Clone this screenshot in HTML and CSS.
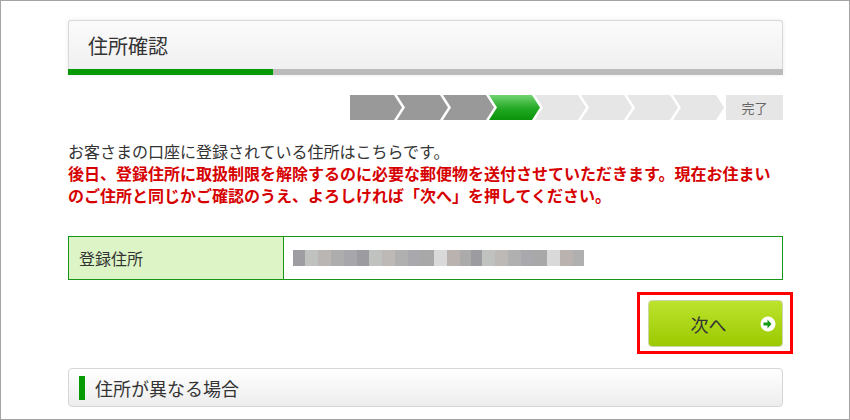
FILE: index.html
```html
<!DOCTYPE html>
<html lang="ja">
<head>
<meta charset="utf-8">
<title>住所確認</title>
<link rel="stylesheet" href="styles.css">
</head>
<body>
<div class="frame">
  <div class="header">
    <h1 class="header-title">住所確認</h1>
    <div class="header-bar"><div class="header-bar-fill"></div></div>
  </div>

  <div class="steps">
    <svg class="steps-svg" width="376" height="25" viewBox="0 0 376 25" aria-hidden="true">
      <defs>
        <linearGradient id="g" x1="0" y1="0" x2="0" y2="1">
          <stop offset="0" stop-color="#72d472"/>
          <stop offset="0.55" stop-color="#22a822"/>
          <stop offset="1" stop-color="#0a940a"/>
        </linearGradient>
      </defs>
      <polygon points="0,0 44,0 52,12.5 44,25 0,25" fill="#999999"/>
      <polygon points="47,0 90,0 98,12.5 90,25 47,25 55,12.5" fill="#999999"/>
      <polygon points="93,0 136,0 144,12.5 136,25 93,25 101,12.5" fill="#999999"/>
      <polygon points="139,0 182,0 190,12.5 182,25 139,25 147,12.5" fill="url(#g)"/>
      <polygon points="185,0 228,0 236,12.5 228,25 185,25 193,12.5" fill="#e6e6e6"/>
      <polygon points="231,0 274,0 282,12.5 274,25 231,25 239,12.5" fill="#e6e6e6"/>
      <polygon points="277,0 320,0 328,12.5 320,25 277,25 285,12.5" fill="#e6e6e6"/>
      <polygon points="323,0 366,0 374,12.5 366,25 323,25 331,12.5" fill="#e6e6e6"/>
    </svg>
    <div class="steps-done">完了</div>
  </div>

  <div class="intro">
    <p class="intro-text">お客さまの口座に登録されている住所はこちらです。</p>
    <p class="intro-alert">後日、登録住所に取扱制限を解除するのに必要な郵便物を送付させていただきます。現在お住まいのご住所と同じかご確認のうえ、よろしければ「次へ」を押してください。</p>
  </div>

  <div class="addr-table">
    <div class="addr-label">登録住所</div>
    <div class="addr-value"><div class="addr-mosaic"></div></div>
  </div>

  <div class="actions">
    <div class="next-wrap">
      <button class="next-btn" type="button">
        <span class="next-label">次へ</span>
        <svg class="next-icon" width="16" height="16" viewBox="0 0 16 16" aria-hidden="true">
          <circle cx="8" cy="8" r="7.5" fill="#ffffff"/>
          <path d="M3.5 6.5 H7.5 V3.5 L11.5 8 L7.5 12.5 V9.5 H3.5 Z" fill="#129a12"/>
        </svg>
      </button>
    </div>
  </div>

  <div class="section">
    <span class="section-mark"></span>
    <h2 class="section-title">住所が異なる場合</h2>
  </div>
</div>
</body>
</html>
```

FILE: styles.css
```css
* { box-sizing: border-box; }

html, body {
  margin: 0;
  padding: 0;
  background: #ffffff;
}

body {
  font-family: "Noto Sans CJK JP", "Noto Sans", "Liberation Sans", sans-serif;
  color: #333333;
}

.frame {
  width: 850px;
  height: 420px;
  border: 1px solid #a4a4a4;
  padding: 19px 66px 0 67px;
  overflow: hidden;
}

/* header */
.header {
  box-shadow: 0 0 5px rgba(0, 0, 0, 0.08);
  border-radius: 3px 3px 0 0;
}

.header-title {
  margin: 0;
  height: 49px;
  display: flex;
  align-items: center;
  padding-left: 19px;
  font-size: 20px;
  font-weight: normal;
  color: #333333;
  border: 1px solid #d8d8d8;
  border-bottom: none;
  border-radius: 3px 3px 0 0;
  background: linear-gradient(#fbfbfb, #f0f0f0);
}

.header-bar {
  height: 6px;
  background: #bbbbbb;
}

.header-bar-fill {
  width: 205px;
  height: 6px;
  background: #079a07;
}

/* steps */
.steps {
  margin-top: 20px;
  display: flex;
  justify-content: flex-end;
  height: 25px;
}

.steps-svg {
  display: block;
}

.steps-done {
  width: 57px;
  height: 25px;
  background: #e6e6e6;
  color: #666666;
  font-size: 13px;
  display: flex;
  align-items: center;
  justify-content: center;
}

/* intro */
.intro {
  margin-top: 20px;
}

.intro-text,
.intro-alert {
  margin: 0;
  font-size: 16px;
  line-height: 22px;
}

.intro-text {
  color: #333333;
}

.intro-alert {
  color: #d60000;
  font-weight: bold;
}

/* address table */
.addr-table {
  margin-top: 30px;
  display: grid;
  grid-template-columns: 215px 1fr;
  height: 44px;
  border: 1px solid #169616;
}

.addr-label {
  background: #ddf5c6;
  border-right: 1px solid #169616;
  display: flex;
  align-items: center;
  padding-left: 10px;
  font-size: 16px;
  color: #333333;
}

.addr-value {
  display: flex;
  align-items: center;
  padding-left: 9px;
}

.addr-mosaic {
  width: 291px;
  height: 16px;
  background: linear-gradient(to right,
    #9e9ea2 0 12px,
    #c0c2c0 12px 25px,
    #b9b6b3 25px 38px,
    #adadad 38px 51px,
    #a7a7ab 51px 64px,
    #9c9ca0 64px 76px,
    #c0c2c0 76px 89px,
    #bcb9b6 89px 102px,
    #b0b0b0 102px 115px,
    #a9a9ad 115px 128px,
    #a8a8a8 128px 141px,
    #d9d9d9 141px 154px,
    #b9b2af 154px 167px,
    #ababab 167px 178px,
    #9c9ca0 178px 189px,
    #c0c2c0 189px 202px,
    #bcb9b6 202px 215px,
    #b0b0b0 215px 228px,
    #a9a9ad 228px 241px,
    #a8a8a8 241px 254px,
    #d9d9d9 254px 267px,
    #b9b2af 267px 280px,
    #b0b0b0 280px 291px);
}

/* actions */
.actions {
  margin-top: 20px;
  display: flex;
  justify-content: flex-end;
}

.next-wrap {
  position: relative;
}

.next-wrap::after {
  content: "";
  position: absolute;
  top: -8px;
  left: -11px;
  right: -10px;
  bottom: -7px;
  border: 3px solid #ff0000;
  pointer-events: none;
}

.next-btn {
  width: 135px;
  height: 47px;
  border: 1px solid #cdd6a8;
  border-radius: 4px;
  background: linear-gradient(#bde32e, #9bc900);
  display: flex;
  align-items: center;
  justify-content: center;
  padding: 0 14px 0 0;
  position: relative;
  font-family: inherit;
  cursor: pointer;
}

.next-label {
  font-size: 18px;
  color: #333333;
}

.next-icon {
  position: absolute;
  right: 6px;
  top: 15px;
}

/* section */
.section {
  margin-top: 21px;
  height: 39px;
  border: 1px solid #d6d6d6;
  border-radius: 4px;
  background: linear-gradient(#ffffff, #ededed);
  display: flex;
  align-items: center;
  padding-left: 10px;
  gap: 10px;
}

.section-mark {
  display: block;
  width: 6px;
  height: 24px;
  background: #079a07;
}

.section-title {
  margin: 0;
  font-size: 18px;
  font-weight: normal;
  color: #333333;
}
```
